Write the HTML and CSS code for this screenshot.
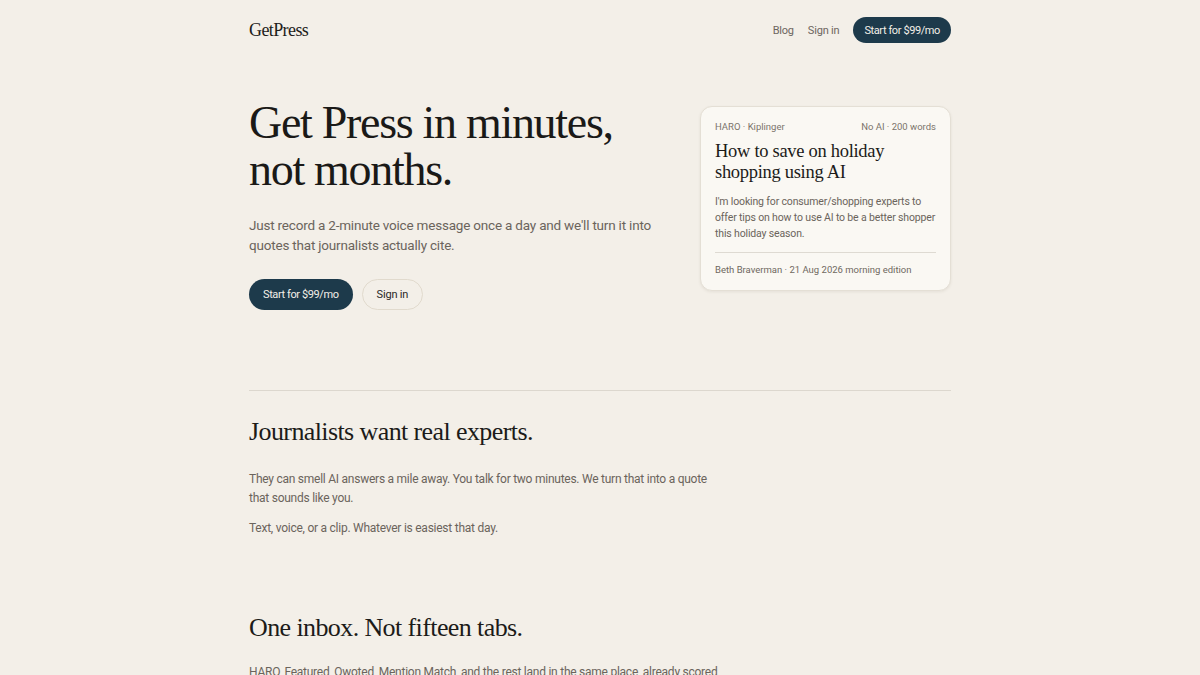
FILE: index.html
```html
<!DOCTYPE html>
<html lang="en">
<head>
<meta charset="utf-8">
<title>GetPress</title>
<link rel="stylesheet" href="styles.css">
</head>
<body>
<div class="wrap">
  <header class="top">
    <div class="logo">GetPress</div>
    <nav class="nav">
      <a class="nav-link" href="#">Blog</a>
      <a class="nav-link" href="#">Sign in</a>
      <a class="btn btn-dark btn-sm" href="#">Start for $99/mo</a>
    </nav>
  </header>

  <section class="hero">
    <div class="hero-text">
      <h1 class="hero-title">Get Press in minutes,<br>not months.</h1>
      <p class="hero-lead">Just record a 2-minute voice message once a day and we'll turn it into quotes that journalists actually cite.</p>
      <div class="hero-actions">
        <a class="btn btn-dark" href="#">Start for $99/mo</a>
        <a class="btn btn-ghost" href="#">Sign in</a>
      </div>
    </div>
    <article class="card">
      <div class="card-meta"><span>HARO · Kiplinger</span><span>No AI · 200 words</span></div>
      <h3 class="card-title">How to save on holiday shopping using AI</h3>
      <p class="card-body">I'm looking for consumer/shopping experts to offer tips on how to use AI to be a better shopper this holiday season.</p>
      <div class="card-foot">Beth Braverman · 21 Aug 2026 morning edition</div>
    </article>
  </section>

  <section class="block block-first">
    <h2 class="block-title">Journalists want real experts.</h2>
    <p class="block-text">They can smell AI answers a mile away. You talk for two minutes. We turn that into a quote that sounds like you.</p>
    <p class="block-text">Text, voice, or a clip. Whatever is easiest that day.</p>
  </section>

  <section class="block">
    <h2 class="block-title block-title-tight">One inbox. Not fifteen tabs.</h2>
    <p class="block-text">HARO, Featured, Qwoted, Mention Match, and the rest land in the same place, already scored and sorted for you.</p>
  </section>
</div>
</body>
</html>
```

FILE: styles.css
```css
* { box-sizing: border-box; }
html, body { margin: 0; padding: 0; }
body {
  background: #f3efe8;
  color: #1c1b19;
  font-family: Roboto, "Liberation Sans", sans-serif;
}
a { text-decoration: none; color: inherit; }
h1, h2, h3, p { margin: 0; }

.wrap {
  width: 702px;
  margin: 0 auto;
}

.top {
  display: flex;
  align-items: center;
  justify-content: space-between;
  height: 60px;
}
.logo {
  font-family: "Liberation Serif", serif;
  font-size: 18px;
  letter-spacing: -0.6px;
  color: #1e1d1b;
}
.nav {
  display: flex;
  align-items: center;
  gap: 14px;
  font-size: 11px;
  letter-spacing: -0.2px;
}
.nav-link { color: #6d665e; }

.btn {
  display: inline-flex;
  align-items: center;
  justify-content: center;
  border-radius: 999px;
  font-size: 11px;
  letter-spacing: -0.4px;
  height: 31px;
  padding: 0 14px;
}
.btn-dark {
  background: #1d3a4b;
  color: #f3efe8;
}
.btn-sm {
  height: 26px;
  padding: 0 11px;
}
.btn-ghost {
  border: 1px solid #e1dacd;
  color: #2a2826;
  padding: 0 14px;
  letter-spacing: -0.2px;
}

.hero {
  display: flex;
  justify-content: space-between;
  align-items: flex-start;
  padding-top: 46px;
  padding-bottom: 80px;
  border-bottom: 1px solid #dcd7ce;
}
.hero-text { width: 430px; }
.hero-title {
  font-family: "Liberation Serif", serif;
  font-weight: 400;
  font-size: 46px;
  line-height: 47px;
  letter-spacing: -1.3px;
  color: #1a1917;
  margin-top: -7px;
}
.hero-lead {
  margin-top: 22px;
  font-size: 13.5px;
  line-height: 20px;
  letter-spacing: -0.2px;
  color: #6b645c;
  width: 430px;
}
.hero-actions {
  display: flex;
  gap: 9px;
  margin-top: 24px;
}

.card {
  width: 251px;
  background: #faf8f3;
  border: 1px solid #e4dfd5;
  border-radius: 12px;
  box-shadow: 0 1px 3px rgba(60, 50, 30, 0.08);
  padding: 14px 14px 15px;
}
.card-meta {
  display: flex;
  justify-content: space-between;
  font-size: 9.5px;
  color: #7b746b;
}
.card-title {
  font-family: "Liberation Serif", serif;
  font-weight: 400;
  font-size: 18.5px;
  line-height: 21px;
  letter-spacing: -0.3px;
  color: #1c1b19;
  margin-top: 9px;
}
.card-body {
  margin-top: 11px;
  font-size: 10.5px;
  line-height: 16px;
  letter-spacing: -0.15px;
  color: #6b645c;
  padding-bottom: 10px;
  border-bottom: 1px solid #dedad2;
}
.card-foot {
  margin-top: 11px;
  font-size: 9.5px;
  color: #6f685f;
}

.block-first { padding-top: 24px; padding-bottom: 62px; }
.block-title {
  font-family: "Liberation Serif", serif;
  font-weight: 400;
  font-size: 26px;
  line-height: 34px;
  letter-spacing: -0.6px;
  color: #1c1b19;
  margin-bottom: 21px;
}
.block-title-tight { margin-bottom: 18px; }
.block-text {
  font-size: 12px;
  line-height: 19px;
  letter-spacing: -0.25px;
  color: #6b645c;
  width: 474px;
  margin-bottom: 11px;
}
```
